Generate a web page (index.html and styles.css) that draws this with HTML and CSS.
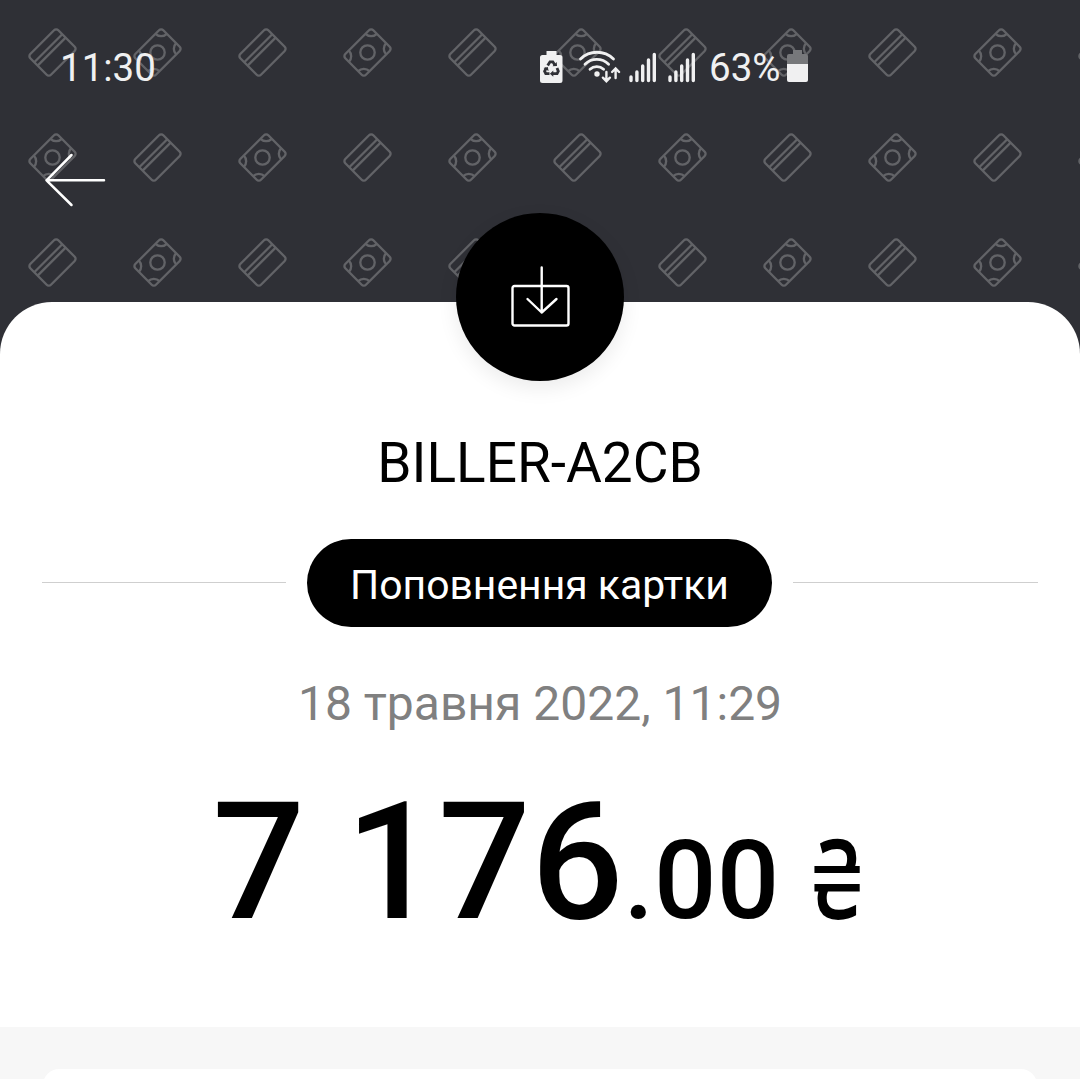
FILE: index.html
```html
<!DOCTYPE html>
<html lang="uk">
<head>
<meta charset="utf-8">
<title>Поповнення картки</title>
<link rel="stylesheet" href="styles.css">
</head>
<body>
<div class="screen">
  <header class="header">
    <svg class="pattern" width="1080" height="360" aria-hidden="true">
      <defs>
        <g id="card">
          <rect x="-19.800" y="-14.600" width="39.600" height="29.200" rx="3"/>
          <path d="M-19.800-6H19.800M-19.800-1.200H19.800"/>
        </g>
        <g id="note">
          <rect x="-19.800" y="-14.600" width="39.600" height="29.200" rx="3"/>
          <circle r="7.200"/>
          <path d="M-11.800-14.600A8 8 0 0 1-19.800-6.600M11.800-14.600A8 8 0 0 0 19.800-6.600M-11.800 14.600A8 8 0 0 0-19.800 6.600M11.800 14.600A8 8 0 0 1 19.800 6.600"/>
        </g>
        <pattern id="money" width="210" height="210" patternUnits="userSpaceOnUse">
          <g fill="none" stroke="#626367" stroke-width="2.300">
            <use href="#card" transform="translate(52.5 52.5) rotate(-45)"/>
            <use href="#note" transform="translate(157.5 52.5) rotate(-45)"/>
            <use href="#note" transform="translate(52.5 157.5) rotate(-45)"/>
            <use href="#card" transform="translate(157.5 157.5) rotate(-45)"/>
          </g>
        </pattern>
      </defs>
      <rect width="1080" height="360" fill="url(#money)"/>
    </svg>
    <div class="status">
      <span class="clock">11:30</span>
      <div class="tray">
        <svg class="saver" width="23" height="33" viewBox="0 1 23 33">
          <path fill="#f0f0f1" d="M6.500 0h10v4H20a2.500 2.500 0 0 1 2.500 2.500V29.500a2.500 2.500 0 0 1-2.500 2.500H2.500A2.500 2.500 0 0 1 0 29.500V6.500A2.500 2.500 0 0 1 2.500 4h4z"/>
          <g fill="none" stroke="#2f3036" stroke-width="2.800">
            <path d="M7.700 14.500l2.300-3.700h2.800l2.200 3.400M17 17l1.300 3.200-1.200 2.500H13M9.500 22.700H5.800l-1.200-2.500 1.700-3.200"/>
          </g>
          <path fill="#2f3036" d="M12.500 15.300l4.500-.2-.3-4zM13.300 19.600v6.200l-3.400-3.100zM3.500 17l4.300-1 .8 4z"/>
        </svg>
        <svg class="wifi" width="42" height="33" viewBox="0 0 42 33">
          <g fill="none" stroke="#f0f0f1" stroke-width="2.800" stroke-linecap="round">
            <path d="M1.500 7a23.500 23.500 0 0 1 33 0M6 12.200a17 17 0 0 1 23.600 0M11 17.300a10 10 0 0 1 13.600 0"/>
            <path d="M27.400 20v8.500M23.900 25.700l3.500 3.500 3.500-3.500M36.600 26V17M33.100 20l3.500-3.500 3.500 3.500" stroke-width="2.400"/>
          </g>
          <circle cx="18" cy="22" r="2.700" fill="#f0f0f1"/>
        </svg>
        <svg class="signal" width="28" height="33" viewBox="0 0 28 33">
          <path d="M2 25v3.500M7.900 20v8.500M13.700 14v14.500M19.500 8v20.500M25.300 2.500v26" fill="none" stroke="#f0f0f1" stroke-width="3.400" stroke-linecap="round"/>
        </svg>
        <svg class="signal second" width="28" height="33" viewBox="0 0 28 33">
          <path d="M2 25v3.500M7.900 20v8.500M13.700 14v14.500M19.500 8v20.500M25.300 2.500v26" fill="none" stroke="#f0f0f1" stroke-width="3.400" stroke-linecap="round"/>
        </svg>
        <span class="percent">63%</span>
        <svg class="battery" width="21" height="33" viewBox="0 0 21 33">
          <path fill="#77787b" d="M6-2h9v4h4a2 2 0 0 1 2 2v8H0V4a2 2 0 0 1 2-2h4z"/>
          <path fill="#f0f0f1" d="M0 12h21v16a2 2 0 0 1-2 2H2a2 2 0 0 1-2-2z"/>
        </svg>
      </div>
    </div>
    <svg class="back" width="62" height="56" viewBox="0 0 62 56">
      <path d="M28.500 3L3.500 28.300 28.500 53M3.500 28.300H61" fill="none" stroke="#fff" stroke-width="2.500" stroke-linecap="round" stroke-linejoin="round"/>
    </svg>
  </header>

  <main class="sheet">
    <div class="badge">
      <svg width="60" height="62" viewBox="0 0 60 62">
        <path d="M4.500 20h52a2 2 0 0 1 2 2V57.500a2 2 0 0 1-2 2H4.500a2 2 0 0 1-2-2V22a2 2 0 0 1 2-2zM31.700 1.500V46.500M17.500 33L31.700 46.500 46.500 33" fill="none" stroke="#fff" stroke-width="2.400" stroke-linecap="round" stroke-linejoin="round"/>
      </svg>
    </div>
    <h1 class="title">BILLER-A2CB</h1>
    <div class="category">
      <span class="rule"></span>
      <span class="pill">Поповнення картки</span>
      <span class="rule"></span>
    </div>
    <div class="date">18 травня 2022, 11:29</div>
    <div class="amount">7 176<span class="fraction">.00 <span class="currency">₴</span></span></div>
  </main>
  <section class="below"><div class="panel"></div></section>
</div>
</body>
</html>
```
FILE: styles.css
```css
* { box-sizing: border-box; }
body { margin: 0; font-family: Roboto, sans-serif; background: #2f3036; }
svg { display: block; flex: none; overflow: visible; }

.screen {
  width: 1080px;
  height: 1079px;
  overflow: hidden;
  display: flex;
  flex-direction: column;
}

.header { position: relative; height: 302px; flex: none; padding-top: 45px; }
.pattern { position: absolute; left: 0; top: 0; }

.status {
  position: relative;
  display: flex;
  align-items: center;
  justify-content: space-between;
  height: 46px;
  padding: 0 272px 0 60px;
  color: #f0f0f1;
  font-size: 38.500px;
  line-height: 46px;
}
.tray { display: flex; align-items: center; }
.wifi { margin-left: 16px; }
.signal { margin-left: 8px; }
.second { margin-left: 11px; }
.percent { width: 78px; margin-left: 13px; }

.back { position: relative; margin: 61px 0 0 42.500px; }

.sheet {
  position: relative;
  flex: none;
  height: 725px;
  display: flex;
  flex-direction: column;
  align-items: center;
  background: #fff;
  border-radius: 52px 52px 0 0;
}
.badge {
  flex: none;
  width: 168px;
  height: 168px;
  margin-top: -89px;
  display: flex;
  align-items: center;
  justify-content: center;
  background: #000;
  border-radius: 50%;
  box-shadow: 0 7px 20px rgba(0, 0, 0, .08);
}
.title {
  margin: 50px 0 0;
  font-size: 55px;
  font-weight: 400;
  line-height: 64px;
  color: #000;
}
.category {
  align-self: stretch;
  display: flex;
  align-items: flex-start;
  gap: 21px;
  margin-top: 44px;
  padding: 0 42px;
}
.rule { flex: 1; height: 1px; margin-top: 43px; background: #cfcfcf; }
.rule:first-child { flex: 0 0 244px; }
.pill {
  width: 465px;
  height: 88px;
  padding-top: 2px;
  border-radius: 44px;
  background: #000;
  color: #fff;
  font-size: 40.900px;
  line-height: 88px;
  text-align: center;
}
.date {
  margin-top: 47px;
  font-size: 48px;
  line-height: 60px;
  color: #808080;
}
.amount {
  margin-top: 39px;
  padding-left: 1px;
  font-size: 163px;
  font-weight: 500;
  line-height: 180px;
  white-space: pre;
  color: #000;
}
.fraction { font-size: 110px; line-height: 1; }

/* Narrow hryvnia sign whose two bars stay open in the middle */
.currency {
  position: relative;
  display: inline-block;
  width: 62px;
  font-family: "Noto Sans", sans-serif;
  text-align: center;
  transform: translate(-1px, 1px) scaleX(.77);
}
.currency::after {
  content: "";
  position: absolute;
  left: 0;
  right: 0;
  top: 52px;
  height: 11px;
  background: #fff;
}

.below { flex: 1; padding: 42px 43px 0; background: #f7f7f7; }
.panel { height: 40px; border-radius: 16px; background: #fff; }
```
